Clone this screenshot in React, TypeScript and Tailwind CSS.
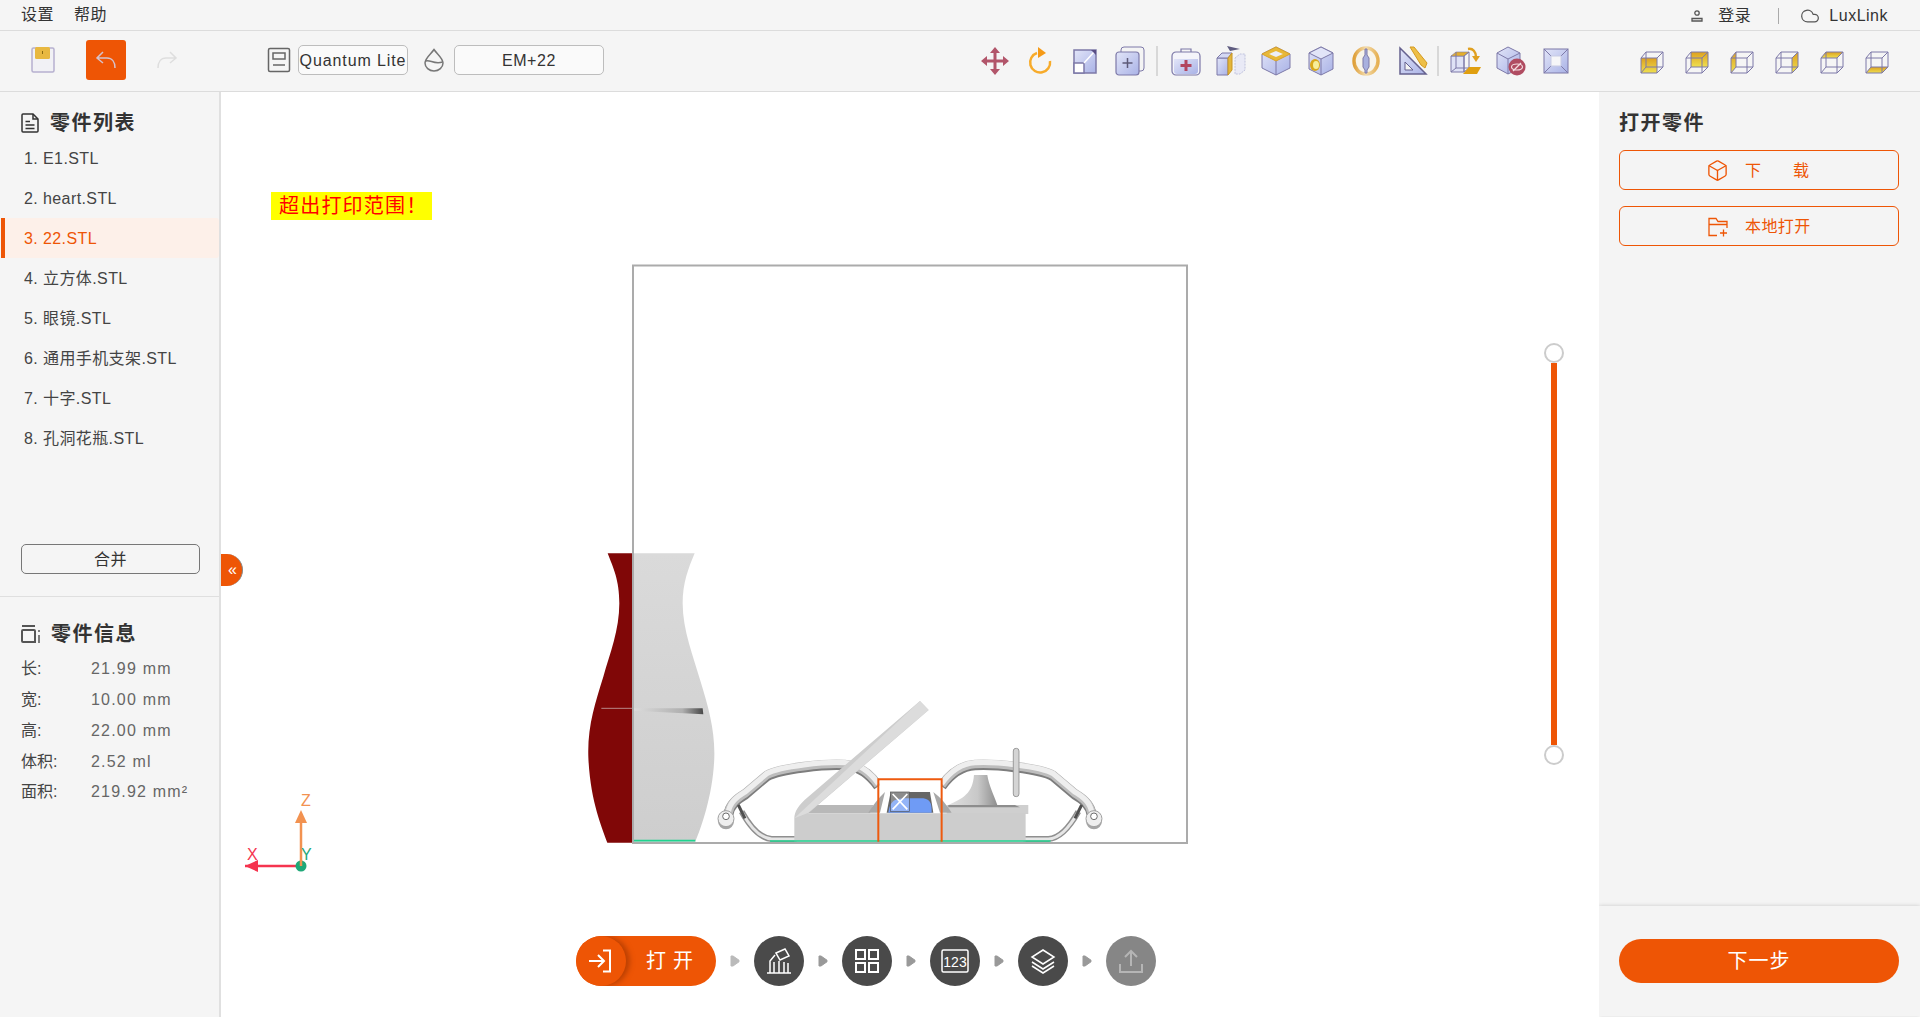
import { ReactNode } from 'react';
import { Box, Cloud } from 'lucide-react';

const parts = ['E1.STL', 'heart.STL', '22.STL', '立方体.STL', '眼镜.STL', '通用手机支架.STL', '十字.STL', '孔洞花瓶.STL'];

const info = [
  { label: '长:', value: '21.99 mm' },
  { label: '宽:', value: '10.00 mm' },
  { label: '高:', value: '22.00 mm' },
  { label: '体积:', value: '2.52 ml' },
  { label: '面积:', value: '219.92 mm²' },
];

const LINE = '#7d79a8';
const BLUE = 'url(#blueFill)';
const GOLD = 'url(#goldFill)';

// shared gradients for toolbar icons and the model drawing
function Defs() {
  return (
    <svg className="absolute w-0 h-0">
      <defs>
        <linearGradient id="blueFill" x1="0" y1="0" x2="1" y2="1">
          <stop offset="0" stopColor="#e2e5f8" />
          <stop offset="1" stopColor="#a9b2e6" />
        </linearGradient>
        <linearGradient id="goldFill" x1="0" y1="0" x2="0" y2="1">
          <stop offset="0" stopColor="#dda020" />
          <stop offset="1" stopColor="#efe050" />
        </linearGradient>
        <linearGradient id="vaseFill" x1="0" y1="0" x2="0" y2="1">
          <stop offset="0" stopColor="#dadada" />
          <stop offset="1" stopColor="#cecece" />
        </linearGradient>
        <linearGradient id="slotFill" x1="0" y1="0" x2="1" y2="0">
          <stop offset="0" stopColor="#dcdcdc" />
          <stop offset="0.7" stopColor="#b0b0b0" />
          <stop offset="1" stopColor="#484848" />
        </linearGradient>
        <linearGradient id="standFill" x1="0" y1="0" x2="1" y2="0">
          <stop offset="0" stopColor="#e0e0e0" />
          <stop offset="0.6" stopColor="#c8c8c8" />
          <stop offset="1" stopColor="#8e8e8e" />
        </linearGradient>
        <linearGradient id="ringFill" x1="0" y1="0" x2="1" y2="0">
          <stop offset="0" stopColor="#dfa03a" />
          <stop offset="0.5" stopColor="#f3dcae" />
          <stop offset="1" stopColor="#e6b052" />
        </linearGradient>
      </defs>
    </svg>
  );
}

function Icon({ w = 30, h = 30, children }: { w?: number; h?: number; children: ReactNode }) {
  return (
    <svg width={w} height={h} viewBox={`0 0 ${w} ${h}`} fill="none">
      {children}
    </svg>
  );
}

const MoveIcon = () => (
  <Icon>
    <path d="M15 5V25M5 15H25" stroke="#b2556a" strokeWidth="3" />
    <path d="M15 1L20 7H10ZM15 29L10 23H20ZM1 15L7 10V20ZM29 15L23 20V10Z" fill="#b2556a" />
  </Icon>
);
const RotateIcon = () => (
  <Icon>
    <path d="M12 7A10 10 0 1 0 25 15" stroke="#f7ab2a" strokeWidth="2.5" />
    <path d="M13 1L21 7L13 12Z" fill="#f59a16" />
  </Icon>
);
const ScaleIcon = () => (
  <Icon>
    <rect x="4" y="4" width="22" height="23" fill={BLUE} stroke={LINE} strokeWidth="1.5" />
    <rect x="4" y="17" width="10" height="10" fill="#ffffff" stroke={LINE} strokeWidth="1.5" />
    <path d="M14 17L24 6" stroke="#ffffff" strokeWidth="1.5" />
    <path d="M21 4H26V9Z" fill="#5a4f86" />
  </Icon>
);
const CopyIcon = () => (
  <Icon>
    <rect x="6" y="1" width="23" height="24" rx="3" fill="#f4f4f4" stroke={LINE} strokeWidth="1" />
    <rect x="1" y="6" width="23" height="23" rx="3" fill={BLUE} stroke={LINE} strokeWidth="1.2" />
    <path d="M12.500 12V22M7.500 17H17.500" stroke="#5d5a78" strokeWidth="1.5" />
  </Icon>
);
const KitIcon = () => (
  <Icon>
    <path d="M10 6V3H20V6" stroke={LINE} strokeWidth="1.2" />
    <rect x="1" y="6" width="28" height="23" rx="4" fill="#f4f4fa" stroke={LINE} strokeWidth="1.2" />
    <path d="M3 13H27V25A3 3 0 0 1 24 28H6A3 3 0 0 1 3 25Z" fill={BLUE} />
    <path d="M15 14V25M9.500 19.500H20.500" stroke="#b2455f" strokeWidth="3" />
  </Icon>
);
const SplitIcon = () => (
  <Icon>
    <path d="M11 0L24 3L14 5Z" fill="#5f5c80" />
    <path d="M1 12H12V29H1Z" fill={BLUE} stroke={LINE} />
    <path d="M1 12L6 7H16L12 12Z" fill="#d5d9f3" stroke={LINE} />
    <path d="M12 12L16 7V24L12 29Z" fill="#e3b63a" stroke="#c89525" />
    <path d="M19 12L24 8H29V24L24 28H19Z" fill="#e9eaf6" stroke="#bfc2dc" strokeDasharray="2 1" />
  </Icon>
);
const HollowIcon = () => (
  <Icon>
    <path d="M15 1L29 8V22L15 29L1 22V8Z" fill={BLUE} stroke={LINE} />
    <path d="M15 1L29 8L15 15L1 8Z" fill="#e8b838" stroke="#d9a228" />
    <path d="M15 5L22 8L15 11L8 8Z" fill="#eceef8" />
    <path d="M15 15V29" stroke={LINE} />
  </Icon>
);
const HoleIcon = () => (
  <Icon w={26} h={30}>
    <path d="M13 1L25 7V23L13 29L1 23V7Z" fill={BLUE} stroke={LINE} />
    <path d="M1 7L13 13L25 7L13 1Z" stroke={LINE} fill="#e2e5f8" />
    <path d="M13 13V29" stroke={LINE} />
    <ellipse cx="7" cy="19" rx="5" ry="6" fill="#d9a81c" />
    <ellipse cx="8" cy="19" rx="3" ry="4" fill="#f7ee9a" />
  </Icon>
);
const RingIcon = () => (
  <Icon>
    <ellipse cx="15" cy="15" rx="12" ry="13" fill="#f8f4ea" stroke="url(#ringFill)" strokeWidth="3.500" />
    <path d="M14 3H16V9L18 12V21L16 24V27H14V24L12 21V12L14 9Z" fill="#a9b0de" stroke={LINE} />
  </Icon>
);
const RulerIcon = () => (
  <Icon>
    <path d="M2 2L28 28H2Z" fill={BLUE} stroke="#65618f" strokeWidth="1.5" />
    <path d="M7 16L15 24H7Z" fill="#f4f4f4" stroke="#65618f" />
    <path d="M12 1L16 1L29 17L27 22L23 19Z" fill="#eebf48" stroke="#d49a20" />
  </Icon>
);
const LayIcon = () => (
  <Icon w={32} h={28}>
    <path d="M1 9H14V25H1Z" fill="#dfe2f6" stroke={LINE} />
    <path d="M1 9L6 5H19L14 9Z" fill="#e3ae2e" stroke={LINE} strokeWidth="0.6" />
    <path d="M14 9L19 5V21L14 25ZM6 5V21L1 25M6 21H19" stroke={LINE} />
    <path d="M18 2C23 1 26 5 26 10" stroke="#e0a020" strokeWidth="2.5" />
    <path d="M22 9H30L26 15Z" fill="#e0a020" />
    <path d="M19 20H31L27 27H13Z" fill="#e09f10" />
  </Icon>
);
const HideIcon = () => (
  <Icon>
    <path d="M12 1L24 7V22L12 28L1 22V7Z" fill={BLUE} stroke={LINE} />
    <path d="M1 7L12 13L24 7" stroke={LINE} />
    <path d="M12 13V28" stroke={LINE} />
    <circle cx="21" cy="21" r="8.500" fill="#b04c61" />
    <ellipse cx="21" cy="21" rx="5.500" ry="3" stroke="#f4dce0" strokeWidth="1.2" />
    <path d="M17 25L25 17" stroke="#f4dce0" strokeWidth="1.2" />
  </Icon>
);
const FrameIcon = () => (
  <Icon w={26} h={26}>
    <rect x="1" y="1" width="24" height="24" fill={BLUE} stroke={LINE} />
    <path d="M1 1L8 8M25 1L18 8M1 25L8 18M25 25L18 18" stroke={LINE} />
    <rect x="8" y="8" width="10" height="10" fill="#f6f6f8" stroke="#c8cbe4" />
  </Icon>
);

// which face of the wireframe cube is filled gold
const cubeFaces = [
  'M1 9H17V24H1Z',
  'M6 3H23V18H6Z',
  'M1 9L6 3V18L1 24Z',
  'M17 9L23 3V18L17 24Z',
  'M1 9L6 3H23L17 9Z',
  'M1 24L6 18H23L17 24Z',
];

function CubeIcon({ face }: { face: string }) {
  return (
    <Icon w={24} h={25}>
      <path d={face} fill={GOLD} />
      <path d="M1 9H17V24H1ZM6 3H23V18H6ZM1 9L6 3M17 9L23 3M1 24L6 18M17 24L23 18" stroke={LINE} strokeWidth="1" />
    </Icon>
  );
}

function Cell({ children }: { children: ReactNode }) {
  return <div className="w-[45px] flex justify-center">{children}</div>;
}

const Separator = () => <div className="w-[2px] h-[30px] bg-[#d8d8d8] mx-[4px]" />;

function Toolbar() {
  return (
    <div className="h-[61px] flex items-center border-b border-[#dcdcdc] pl-[31px] pb-[2px]">
      <svg width="24" height="26" viewBox="0 0 24 26" fill="none">
        <rect x="1" y="1" width="22" height="24" rx="1.500" fill="#f1f1f5" stroke="#b6b0cf" strokeWidth="1.500" />
        <rect x="4" y="0" width="15" height="12" rx="1.500" fill="#e8b840" />
        <rect x="11" y="4" width="1" height="3" fill="#8a6a10" />
      </svg>
      <button className="ml-[31px] w-10 h-10 rounded-[3px] bg-[#ee5505] flex items-center justify-center">
        <svg width="24" height="24" viewBox="0 0 24 24" fill="none" stroke="#d5c2cc" strokeWidth="1.500">
          <path d="M9 4L3 10L9 15M3 10H13C18 10 21 14 21 20" />
        </svg>
      </button>
      <svg className="ml-[29px]" width="24" height="24" viewBox="0 0 24 24" fill="none" stroke="#dedede" strokeWidth="1.500">
        <path d="M15 4L21 10L15 15M21 10H11C6 10 3 14 3 20" />
      </svg>
      <svg className="ml-[88px]" width="24" height="26" viewBox="0 0 24 26" fill="none" stroke="#666666" strokeWidth="1.500">
        <rect x="1.500" y="1.500" width="21" height="23" rx="1.500" />
        <rect x="6" y="6" width="12" height="6" />
        <path d="M6 18H18" />
      </svg>
      <div className="ml-[7px] w-[110px] h-[30px] pt-px flex items-center justify-center bg-[#fafafa] border border-[#bdbdbd] rounded-[5px] text-[16px] tracking-[0.9px] text-[#333333] whitespace-nowrap">
        Quantum Lite
      </div>
      <svg className="ml-[15px]" width="22" height="24" viewBox="0 0 22 24" fill="none" stroke="#777777" strokeWidth="1.500">
        <path d="M11 1.500C8 6 2 10 2 15A9 8 0 0 0 20 15C20 10 14 6 11 1.500Z" />
        <path d="M2.500 13C7 11 11 17 19.500 14" />
      </svg>
      <div className="ml-[9px] w-[150px] h-[30px] pt-px flex items-center justify-center bg-[#fafafa] border border-[#bdbdbd] rounded-[5px] text-[16px] tracking-[0.6px] text-[#333333]">
        EM+22
      </div>
      <div className="ml-[368px] mt-[2px] flex items-center">
        <Cell><MoveIcon /></Cell>
        <Cell><RotateIcon /></Cell>
        <Cell><ScaleIcon /></Cell>
        <Cell><CopyIcon /></Cell>
        <Separator />
        <div className="ml-px" />
        <Cell><KitIcon /></Cell>
        <Cell><SplitIcon /></Cell>
        <Cell><HollowIcon /></Cell>
        <Cell><HoleIcon /></Cell>
        <Cell><RingIcon /></Cell>
        <div className="translate-x-[2px]">
          <Cell><RulerIcon /></Cell>
        </div>
        <Separator />
        <Cell><LayIcon /></Cell>
        <Cell><HideIcon /></Cell>
        <Cell><FrameIcon /></Cell>
      </div>
      <div className="ml-[51px] mt-[2px] flex items-center">
        {cubeFaces.map(face => (
          <Cell key={face}><CubeIcon face={face} /></Cell>
        ))}
      </div>
    </div>
  );
}

function LeftPanel() {
  return (
    <aside className="w-[221px] shrink-0 bg-[#f5f5f5] border-r-2 border-[#e0e0e0]">
      <div className="h-[505px] border-b border-[#dfdfdf]">
        <div className="h-[46px] pt-[15px] pl-[21px] flex items-center gap-[11px]">
          <svg width="18" height="20" viewBox="0 0 18 20" fill="none" stroke="#333333" strokeWidth="1.500">
            <path d="M2 1H12L17 6V18A1 1 0 0 1 16 19H2A1 1 0 0 1 1 18V2A1 1 0 0 1 2 1Z" />
            <path d="M12 1V6H17M4.500 8.500H9M4.500 12H13.500M4.500 15.500H13.500" />
          </svg>
          <h2 className="text-[20px] font-bold tracking-[1.5px] text-[#333333]">零件列表</h2>
        </div>
        <ul>
          {parts.map((name, i) => (
            <li
              key={name}
              className={
                i === 2
                  ? 'h-10 ml-px pl-[19px] pt-px flex items-center text-[16px] tracking-[0.4px] text-[#ee5505] bg-[#fdf0e9] border-l-4 border-[#ee5505] rounded-r-[3px]'
                  : 'h-10 pl-6 pt-px flex items-center text-[16px] tracking-[0.4px] text-[#444444]'
              }
            >
              {i + 1}. {name}
            </li>
          ))}
        </ul>
        <button className="block mt-[86px] ml-[21px] w-[179px] h-[30px] pt-px border border-[#777777] rounded-[5px] text-[16px] tracking-[0.5px] text-[#333333]">
          合并
        </button>
      </div>
      <div className="pt-[21px] pl-[21px]">
        <div className="h-8 flex items-center gap-[11px]">
          <svg width="19" height="20" viewBox="0 0 19 20" fill="none" stroke="#555555" strokeWidth="2">
            <path d="M1 2H14M2 6H13A1 1 0 0 1 14 7V18H2A1 1 0 0 1 1 17V7A1 1 0 0 1 2 6Z" />
            <path d="M18 6V8M18 11V19" strokeWidth="1.500" />
          </svg>
          <h2 className="text-[20px] font-bold tracking-[1.5px] text-[#333333]">零件信息</h2>
        </div>
        <dl className="mt-1">
          {info.map(row => (
            <div key={row.label} className="h-[30.75px] flex items-center text-[16px]">
              <dt className="w-[70px] text-[#444444]">{row.label}</dt>
              <dd className="tracking-[1.2px] text-[#666666]">{row.value}</dd>
            </div>
          ))}
        </dl>
      </div>
    </aside>
  );
}

// glasses frame passes, written in 3x coordinates
const frameLeft = 'M85 370C90 340 110 325 135 310L200 255C240 232 380 218 435 222C480 225 510 250 535 285';
const frameRight = 'M725 285C750 250 780 225 825 222C880 218 1020 232 1060 255L1125 310C1150 325 1170 340 1175 370';
const rimLeft = 'M125 365C150 410 180 445 215 447H290';
const rimRight = 'M1135 365C1110 410 1080 445 1045 447H970';

function Hinge({ x }: { x: number }) {
  return (
    <g>
      <circle cx={x} cy={394} r={24} fill="#a5a5a5" />
      <circle cx={x} cy={386} r={24} fill="#eeeeee" stroke="#a0a0a0" strokeWidth="3" />
      <circle cx={x} cy={379} r={10} fill="#ffffff" stroke="#6b6b6b" strokeWidth="3" />
    </g>
  );
}

// the print volume and the loaded models; viewBox uses page coordinates
function Scene() {
  return (
    <svg className="absolute inset-0 w-full h-full" viewBox="221 92 1378 925" fill="none">
      <g transform="translate(570 540) scale(0.3333)">
        <path d="M113 40L187 40V908H112C95 860 60 780 55 650C52 560 75 490 100 410C120 340 148 270 148 190C148 120 130 85 113 40Z" fill="#800707" />
        <path d="M190 40H374C355 85 338 130 338 190C338 270 370 350 392 425C415 500 435 570 433 650C430 760 395 860 376 905H190Z" fill="url(#vaseFill)" />
        <path d="M190 505L398 505L400 523L190 512Z" fill="url(#slotFill)" />
        <path d="M94 505H187" stroke="#b98a8a" strokeWidth="3" />
        <path d="M190 902H376" stroke="#1fd38f" strokeWidth="5" />
      </g>
      <g transform="translate(700 690) scale(0.3333)">
        <g fill="none">
          <path d={frameLeft} stroke="#7d7d7d" strokeWidth="30" transform="translate(0 4)" />
          <path d={frameLeft} stroke="#bdbdbd" strokeWidth="26" />
          <path d={frameLeft} stroke="#eeeeee" strokeWidth="16" transform="translate(0 -4)" />
          <path d={frameRight} stroke="#7d7d7d" strokeWidth="30" transform="translate(0 4)" />
          <path d={frameRight} stroke="#bdbdbd" strokeWidth="26" />
          <path d={frameRight} stroke="#eeeeee" strokeWidth="16" transform="translate(0 -4)" />
          <path d={rimLeft} stroke="#8f8f8f" strokeWidth="18" />
          <path d={rimLeft} stroke="#e6e6e6" strokeWidth="9" />
          <path d={rimRight} stroke="#8f8f8f" strokeWidth="18" />
          <path d={rimRight} stroke="#e6e6e6" strokeWidth="9" />
        </g>
        <path d="M115 345L135 385M1145 345L1125 385" stroke="#4f4f4f" strokeWidth="9" />
        <Hinge x={78} />
        <Hinge x={1182} />
        <path d="M745 345C790 325 818 310 822 255H862C868 290 880 310 892 345Z" fill="url(#standFill)" />
        <rect x="940" y="175" width="17" height="145" rx="8" fill="#d4d4d4" stroke="#9a9a9a" strokeWidth="3" />
        <path d="M330 345H520L510 370H320Z" fill="#b8b8b8" />
        <path d="M740 345H985V372H740Z" fill="#cfcfcf" />
        <path d="M745 345H945L960 352H745Z" fill="#8d8d8d" />
        <rect x="538" y="270" width="185" height="36" fill="#ffffff" />
        <path d="M505 368C520 345 535 325 555 306L540 368ZM755 368C740 345 725 325 700 306L720 368Z" fill="#a8a8a8" />
        <path d="M560 368L572 306H690L700 368Z" fill="#666666" />
        <path d="M565 368C570 340 575 325 620 325H670C695 330 695 345 695 368Z" fill="#6f9bf5" />
        <g stroke="#ffffff" strokeWidth="5">
          <rect x="572" y="306" width="56" height="58" fill="#ffffff" fillOpacity="0.25" stroke="#555555" strokeWidth="2" />
          <path d="M578 312L622 358M622 312L578 358" />
        </g>
        <path d="M283 455V385C283 365 295 345 325 320L660 33L686 60L325 370H977V455Z" fill="#cdcdcd" />
        <path d="M283 385L660 33L686 60L325 368Z" fill="#dcdcdc" />
        <path d="M210 453H1052" stroke="#1fd38f" strokeWidth="5" />
        <path d="M535 455V268H725V455" stroke="#ee5a0e" strokeWidth="6" />
      </g>
      <rect x="633" y="265.500" width="554" height="577.500" stroke="#ababab" strokeWidth="2" />
      <g>
        <path d="M245 866H301" stroke="#f5344f" strokeWidth="2.500" />
        <path d="M245 866L258 860V872Z" fill="#f5344f" />
        <path d="M301 866V818" stroke="#f29250" strokeWidth="2.500" />
        <path d="M301 810L307 823H295Z" fill="#f29250" />
        <circle cx="301" cy="866" r="5.500" fill="#1fa878" />
        <path d="M301 866V860" stroke="#f29250" strokeWidth="2.500" />
        <text x="301" y="806" fontSize="16" fill="#f29250">Z</text>
        <text x="247" y="860" fontSize="16" fill="#f5344f">X</text>
        <text x="301" y="860" fontSize="16" fill="#1fa878">Y</text>
      </g>
    </svg>
  );
}

function StepArrow({ light }: { light?: boolean }) {
  return (
    <svg width="10" height="12" viewBox="0 0 10 12">
      <path d="M1 1H3L9 5.200V6.800L3 11H1Z" fill={light ? '#bababa' : '#999999'} stroke={light ? '#bababa' : '#999999'} strokeLinejoin="round" />
    </svg>
  );
}

function StepCircle({ children, muted }: { children: ReactNode; muted?: boolean }) {
  return (
    <div className={muted ? 'w-[50px] h-[50px] rounded-full bg-[#868686] flex items-center justify-center' : 'w-[50px] h-[50px] rounded-full bg-[#4a4a4a] flex items-center justify-center'}>
      {children}
    </div>
  );
}

function Steps() {
  return (
    <div className="absolute left-[355px] top-[844px] flex items-center gap-[14px]">
      <button className="relative w-[140px] h-[50px] rounded-full bg-[#ee5505] overflow-hidden flex items-center">
        <span className="w-[50px] h-[50px] rounded-full flex items-center justify-center shadow-[4px_0_5px_rgba(150,50,0,0.55)] bg-[#ee5505]">
          <svg width="26" height="24" viewBox="0 0 26 24" fill="none" stroke="#ffffff" strokeWidth="2">
            <path d="M1 12H16M10 6L16 12L10 18M15 1.500H22V22.500H15" />
          </svg>
        </span>
        <span className="ml-[20px] text-[20px] tracking-[7px] text-white whitespace-nowrap">打开</span>
      </button>
      <StepArrow light />
      <StepCircle>
        <svg width="26" height="26" viewBox="0 0 26 26" fill="none" stroke="#ffffff" strokeWidth="1.500">
          <path d="M1 25H25M4 25V13L9 7M8 25V14M13 25V13M18 25V14M22 25V15" />
          <path d="M10 5L19 1L23 8L14 12Z" />
        </svg>
      </StepCircle>
      <StepArrow />
      <StepCircle>
        <svg width="26" height="26" viewBox="0 0 26 26" fill="none" stroke="#ffffff" strokeWidth="2">
          <rect x="2" y="2" width="9" height="9" />
          <rect x="15" y="2" width="9" height="9" />
          <rect x="2" y="15" width="9" height="9" />
          <rect x="15" y="15" width="9" height="9" />
        </svg>
      </StepCircle>
      <StepArrow />
      <StepCircle>
        <svg width="28" height="24" viewBox="0 0 28 24" fill="none">
          <rect x="1" y="1" width="26" height="22" rx="1.500" stroke="#ffffff" strokeWidth="1.500" />
          <text x="14" y="17.500" textAnchor="middle" fontSize="14" fill="#ffffff">123</text>
        </svg>
      </StepCircle>
      <StepArrow />
      <StepCircle>
        <svg width="26" height="26" viewBox="0 0 26 26" fill="none" stroke="#ffffff" strokeWidth="1.500">
          <path d="M13 2L24 9L13 16L2 9Z" />
          <path d="M2 14L13 21L24 14M2 18L13 25L24 18" />
        </svg>
      </StepCircle>
      <StepArrow />
      <StepCircle muted>
        <svg width="26" height="26" viewBox="0 0 26 26" fill="none" stroke="#b5b5b5" strokeWidth="2">
          <path d="M13 18V3M7 9L13 3L19 9M2 16V24H24V16" />
        </svg>
      </StepCircle>
    </div>
  );
}

function Canvas() {
  return (
    <main className="relative flex-1 bg-white">
      <Scene />
      <div className="absolute left-[50px] top-[100px] w-[161px] h-7 pl-2 flex items-center bg-[#ffff00] text-[20px] tracking-[1.2px] text-[#ff0000]">
        超出打印范围！
      </div>
      <button className="absolute left-0 top-[462px] w-[22px] h-8 pl-[2px] rounded-r-full bg-[#ee5505] border-r border-[#888888] text-[16px] leading-none text-white">
        «
      </button>
      <div className="absolute left-[1323px] top-[251px] flex flex-col items-center">
        <div className="w-5 h-5 rounded-full bg-white border-2 border-[#cccccc]" />
        <div className="w-[6px] h-[382px] bg-[#ee5505]" />
        <div className="w-5 h-5 rounded-full bg-white border-2 border-[#cccccc]" />
      </div>
      <Steps />
    </main>
  );
}

function RightPanel() {
  return (
    <aside className="w-[321px] shrink-0 mb-px bg-[#f4f4f4] flex flex-col">
      <div className="flex-1 px-5">
        <h2 className="h-[46px] pt-[15px] flex items-center text-[20px] font-bold tracking-[1.5px] text-[#333333]">打开零件</h2>
        <button className="mt-3 w-[280px] h-10 pt-px flex items-center pl-[86px] border border-[#ee5505] rounded-[6px] text-[16px] text-[#ee5505]">
          <Box size={23} strokeWidth={1.4} />
          <span className="ml-[16px] w-[64px] flex justify-between">
            <span>下</span>
            <span>载</span>
          </span>
        </button>
        <button className="mt-4 w-[280px] h-10 pt-px flex items-center pl-[88px] border border-[#ee5505] rounded-[6px] text-[16px] text-[#ee5505]">
          <svg width="20" height="20" viewBox="0 0 20 20" fill="none" stroke="#ee5505" strokeWidth="1.300">
            <path d="M9 18.500H1V1.500H8L10 4.500H19V11M12 16H19M15.500 12.500V19.500M1 7.500H19" />
          </svg>
          <span className="ml-[17px] tracking-[0.4px]">本地打开</span>
        </button>
      </div>
      <div className="h-[110px] pt-[33px] px-5 bg-[#f4f4f4] shadow-[0_0_4px_rgba(0,0,0,0.18)]">
        <button className="w-[280px] h-11 rounded-full bg-[#ee5505] text-[20px] tracking-[1px] text-white">下一步</button>
      </div>
    </aside>
  );
}

export default function App() {
  return (
    <div className="relative h-[1017px] w-[1920px] overflow-hidden flex flex-col bg-white font-['Liberation_Sans','Noto_Sans_CJK_SC',sans-serif]">
      <Defs />
      <header className="h-[31px] shrink-0 bg-[#f5f5f5] border-b border-[#dcdcdc] flex items-center text-[16px] tracking-[0.5px] text-[#333333] pl-[21px]">
        <span>设置</span>
        <span className="ml-[20px]">帮助</span>
        <div className="ml-auto pt-px flex items-center pr-[32px]">
          <svg width="12" height="12" viewBox="0 0 12 12" fill="none" stroke="#555555" strokeWidth="1.300">
            <circle cx="6" cy="3" r="2.200" />
            <path d="M1 11V8.500H11V11Z" />
          </svg>
          <span className="ml-[15px]">登录</span>
          <div className="ml-[27px] w-px h-4 bg-[#aaaaaa]" />
          <Cloud className="ml-[21px]" size={20} strokeWidth={1.5} color="#555555" />
          <span className="ml-[9px]">LuxLink</span>
        </div>
      </header>
      <div className="shrink-0 bg-[#f5f5f5]">
        <Toolbar />
      </div>
      <div className="flex-1 flex min-h-0">
        <LeftPanel />
        <Canvas />
        <RightPanel />
      </div>
    </div>
  );
}
